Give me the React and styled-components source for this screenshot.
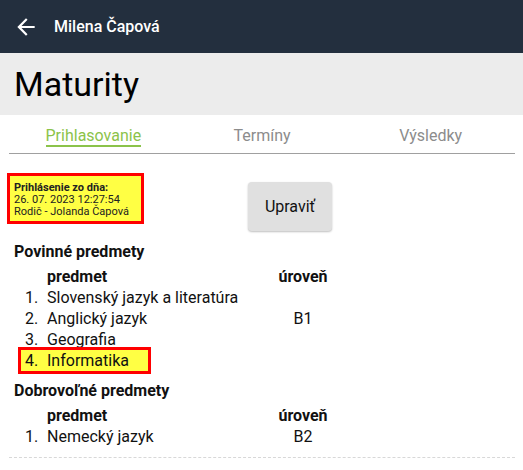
import React from 'react';
import styled, { createGlobalStyle } from 'styled-components';

const GlobalStyle = createGlobalStyle`
    body {
        margin: 0;
        background: #fff;
        font-family: Roboto, "Noto Sans", sans-serif;
        color: #111;
    }
`;

const TopBar = styled.header`
    display: flex;
    align-items: center;
    height: 53px;
    background-color: #232f3e;
    color: #fff;
    padding-left: 13px;
`;

const BackIcon = styled.svg`
    width: 26px;
    height: 26px;
    fill: #fff;
    margin-right: 15px;
`;

const UserName = styled.span`
    font-size: 16px;
    font-weight: 500;
`;

const TitleBar = styled.div`
    display: flex;
    align-items: center;
    height: 62px;
    padding-left: 14px;
    background-color: #ececec;
`;

const Title = styled.h1`
    margin: 0;
    font-size: 34px;
    font-weight: 400;
    color: #000;
`;

const Content = styled.main`
    padding: 0 8px 0 9px;
`;

const Tabs = styled.nav`
    display: flex;
    padding-top: 11px;
    padding-bottom: 6px;
    border-bottom: 1px solid #a0a0a0;
`;

const Tab = styled.div`
    flex: 1;
    text-align: center;
    font-size: 16px;
`;

const TabLabel = styled.span`
    display: inline-block;
    line-height: 19px;
    color: ${p => (p.$active ? '#8bc34a' : '#8c8c8c')};
    border-bottom: 2px solid ${p => (p.$active ? '#8bc34a' : 'transparent')};
`;

const TopRow = styled.div`
    display: flex;
    align-items: flex-start;
    margin-top: 19px;
`;

const Notice = styled.div`
    width: 127px;
    margin-left: -2px;
    padding: 6px 0 3px 4px;
    border: 3px solid #ff0000;
    background-color: #ffff44;
    font-size: 11px;
    line-height: 12px;
    color: #222;
`;

const NoticeTitle = styled.div`
    font-weight: 700;
`;

const EditButton = styled.button`
    margin: 9px 0 0 104px;
    width: 84px;
    height: 49px;
    border: none;
    border-radius: 4px;
    background-color: #e0e0e0;
    box-shadow: 0 1px 2px rgba(0, 0, 0, 0.25);
    font-family: inherit;
    font-size: 16px;
    color: #111;
    cursor: pointer;
`;

const SectionTitle = styled.h2`
    margin: ${p => p.$top}px 0 5px 5px;
    font-size: 16px;
    font-weight: 700;
    line-height: 19px;
`;

const Row = styled.div`
    display: grid;
    grid-template-columns: 26px 208px 96px;
    margin-left: 12px;
    height: 21px;
    line-height: 21px;
    font-size: 16px;
    font-weight: ${p => (p.$head ? 700 : 400)};
`;

const Lead = styled.div`
    grid-column: 1 / 3;
    display: grid;
    grid-template-columns: 26px 1fr;
    width: ${p => (p.$mark ? '127px' : 'auto')};
    background-color: ${p => (p.$mark ? '#ffff44' : 'transparent')};
    outline: ${p => (p.$mark ? '3px solid #ff0000' : 'none')};
`;

const Num = styled.span`
    padding-left: 4px;
`;

const Level = styled.span`
    text-align: center;
`;

const Divider = styled.hr`
    margin: 10px 0 0;
    border: none;
    border-top: 1px dashed #d8d8d8;
`;

const mandatory = [
    { name: 'Slovenský jazyk a literatúra', level: '' },
    { name: 'Anglický jazyk', level: 'B1' },
    { name: 'Geografia', level: '' },
    { name: 'Informatika', level: '', mark: true },
];

const optional = [{ name: 'Nemecký jazyk', level: 'B2' }];

function SubjectTable({ items }) {
    return (
        <div>
            <Row $head>
                <span />
                <span>predmet</span>
                <Level>úroveň</Level>
            </Row>
            {items.map((s, i) => (
                <Row key={s.name}>
                    <Lead $mark={s.mark}>
                        <Num>{i + 1}.</Num>
                        <span>{s.name}</span>
                    </Lead>
                    <Level>{s.level}</Level>
                </Row>
            ))}
        </div>
    );
}

export default function App() {
    return (
        <>
            <GlobalStyle />
            <TopBar>
                <BackIcon viewBox="0 0 24 24">
                    <path d="M20 11H7.83l5.59-5.59L12 4l-8 8 8 8 1.41-1.41L7.83 13H20v-2z" />
                </BackIcon>
                <UserName>Milena Čapová</UserName>
            </TopBar>
            <TitleBar>
                <Title>Maturity</Title>
            </TitleBar>
            <Content>
                <Tabs>
                    <Tab><TabLabel $active>Prihlasovanie</TabLabel></Tab>
                    <Tab><TabLabel>Termíny</TabLabel></Tab>
                    <Tab><TabLabel>Výsledky</TabLabel></Tab>
                </Tabs>
                <TopRow>
                    <Notice>
                        <NoticeTitle>Prihlásenie zo dňa:</NoticeTitle>
                        <div>26. 07. 2023 12:27:54</div>
                        <div>Rodič - Jolanda Čapová</div>
                    </Notice>
                    <EditButton>Upraviť</EditButton>
                </TopRow>
                <SectionTitle $top={11}>Povinné predmety</SectionTitle>
                <SubjectTable items={mandatory} />
                <SectionTitle $top={10}>Dobrovoľné predmety</SectionTitle>
                <SubjectTable items={optional} />
                <Divider />
            </Content>
        </>
    );
}
